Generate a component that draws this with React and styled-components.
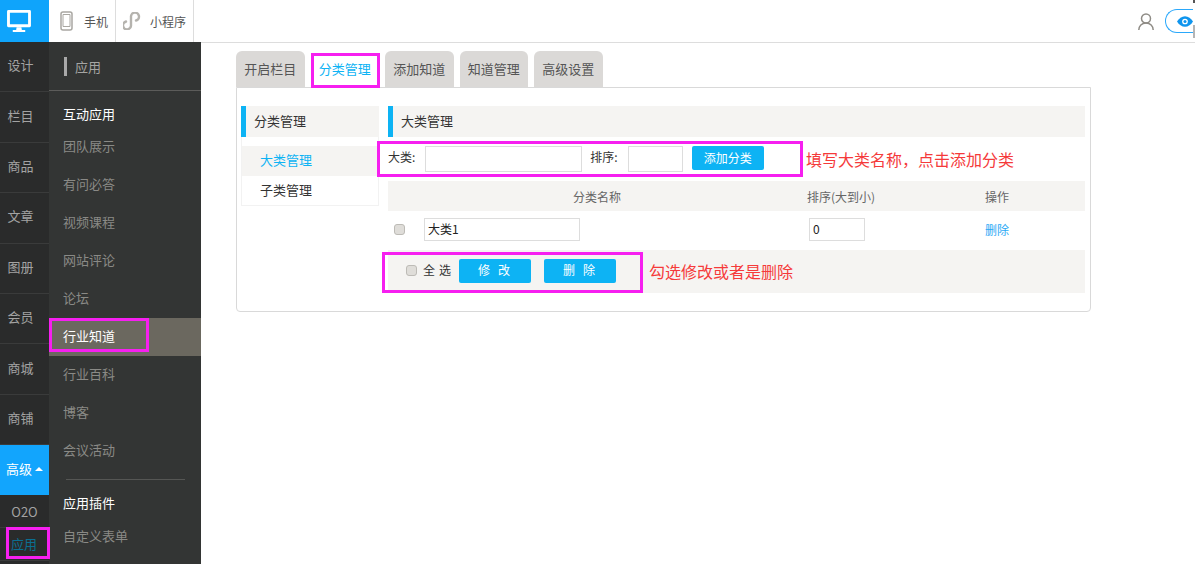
import React from "react";
import styled, { createGlobalStyle } from "styled-components";

const GlobalStyle = createGlobalStyle`
  html, body {
    margin: 0;
    padding: 0;
    height: 564px;
    overflow: hidden;
    background: #fff;
    font-family: "Noto Sans CJK SC", "Liberation Sans", sans-serif;
    font-size: 13px;
    color: #333;
  }
  * { box-sizing: border-box; }
`;

const Page = styled.div`
  position: relative;
  width: 1195px;
  height: 564px;
  overflow: hidden;
`;

const TopBar = styled.header`
  display: flex;
  height: 42px;
`;

const Logo = styled.div`
  width: 49px;
  height: 42px;
  background: #0fa4fb;
  display: flex;
  align-items: center;
  padding-left: 7px;
`;

const DeviceTab = styled.div`
  display: flex;
  align-items: center;
  width: ${(p) => p.$w}px;
  padding-left: ${(p) => p.$pad}px;
  gap: ${(p) => p.$gap}px;
  font-size: 12px;
  color: #555;
  border-right: 1px solid #ddd;
`;

const TopRight = styled.div`
  margin-left: auto;
  display: flex;
  align-items: center;
  gap: 11px;
  height: 42px;
  padding-right: 2px;
`;

const EyePill = styled.div`
  width: 28px;
  height: 24px;
  border: 1px solid #2aa8fb;
  border-radius: 12px 0 0 12px;
  border-right: none;
  display: flex;
  align-items: center;
  padding-left: 11px;
`;

const ScrollEdge = styled.div`
  position: absolute;
  top: 0;
  right: 0;
  width: 2px;
  height: 38px;
  background: linear-gradient(#555 0 3px, #fff 3px 25px, #b5b5b5 25px);
`;

const Body = styled.div`
  display: flex;
  height: 522px;
`;

const Rail = styled.nav`
  width: 49px;
  flex-shrink: 0;
  background: #2a2b2b;
  display: flex;
  flex-direction: column;
`;

const RailItem = styled.div`
  height: ${(p) => p.$h || 50.4}px;
  flex-shrink: 0;
  padding: 0 ${(p) => (p.$pr === undefined ? 8 : p.$pr)}px ${(p) => (p.$pb === undefined ? 4 : p.$pb)}px 0;
  display: flex;
  align-items: center;
  justify-content: center;
  gap: 3px;
  color: ${(p) => (p.$active ? "#fff" : p.$link ? "#0b6f92" : "#a3a3a3")};
  background: ${(p) => (p.$active ? "#12a5fd" : "transparent")};
  border-bottom: 1px solid ${(p) => (p.$active ? "#12a5fd" : "#3a3b3b")};
`;

const Caret = styled.span`
  width: 0;
  height: 0;
  border-left: 4px solid transparent;
  border-right: 4px solid transparent;
  border-bottom: 4px solid #fff;
`;

const SidePanel = styled.aside`
  width: 152px;
  flex-shrink: 0;
  overflow: hidden;
  background: #333534;
  color: #8f8f8b;
  display: flex;
  flex-direction: column;
`;

const PanelTitle = styled.div`
  height: 49px;
  flex-shrink: 0;
  display: flex;
  align-items: center;
  padding-left: 15px;
  gap: 8px;
  border-bottom: 1px solid #5c5c5a;
  color: #a5a5a3;
  font-size: 13px;
  &::before {
    content: "";
    width: 3px;
    height: 19px;
    background: #a9a9a9;
  }
`;

const GroupTitle = styled.div`
  height: ${(p) => p.$h}px;
  flex-shrink: 0;
  padding: 7px 0 0 14px;
  display: flex;
  align-items: center;
  color: #fff;
`;

const SideLink = styled.div`
  height: 38px;
  flex-shrink: 0;
  padding: 0 0 4px 14px;
  display: flex;
  align-items: center;
  color: ${(p) => (p.$active ? "#fff" : "#8a8a86")};
  background: ${(p) => (p.$active ? "#6b685f" : "transparent")};
`;

const SideRule = styled.div`
  height: 1px;
  flex-shrink: 0;
  margin: 9px 16px 0 17px;
  background: #555654;
`;

const Main = styled.main`
  flex: 1;
  border-top: 1px solid #ddd;
  padding: 8px 0 0 35px;
`;

const Tabs = styled.div`
  display: flex;
  gap: 6px;
  height: 36px;
  position: relative;
  z-index: 1;
`;

const Tab = styled.div`
  width: 68.5px;
  height: ${(p) => (p.$active ? 37 : 36)}px;
  padding-bottom: 2px;
  border-radius: 6px 6px 0 0;
  background: ${(p) => (p.$active ? "#fff" : "#dbd9d7")};
  color: ${(p) => (p.$active ? "#0db3f4" : "#555")};
  display: flex;
  align-items: center;
  justify-content: center;
`;

const Card = styled.section`
  width: 855px;
  height: 225px;
  border: 1px solid #d9d9d9;
  border-radius: 0 0 4px 4px;
  padding: 18px 5px 0 4px;
  display: flex;
  gap: 9px;
`;

const LeftCol = styled.div`
  width: 138px;
`;

const RightCol = styled.div`
  flex: 1;
`;

const SectionHead = styled.div`
  height: 31px;
  background: #f5f4f2;
  border-left: 5px solid #0db3f4;
  padding: 0 0 2px 8px;
  display: flex;
  align-items: center;
  color: #333;
`;

const SubMenu = styled.div`
  height: 69px;
  border: 1px solid #f2f2f2;
  border-top: none;
  padding-top: 9px;
`;

const SubItem = styled.div`
  height: 30px;
  padding: 0 0 4px 18px;
  display: flex;
  align-items: center;
  background: ${(p) => (p.$active ? "#f5f4f2" : "transparent")};
  color: ${(p) => (p.$active ? "#0db3f4" : "#333")};
`;

const FormRow = styled.div`
  height: 44px;
  padding-top: 9px;
  display: flex;
  align-items: flex-start;
  font-size: 12px;
  color: #333;
`;

const FormLabel = styled.span`
  line-height: 22px;
  margin-right: ${(p) => p.$gap}px;
`;

const TextBox = styled.input`
  width: ${(p) => p.$w}px;
  height: ${(p) => p.$h || 26}px;
  border: 1px solid #ddd;
  background: #fff;
  padding: 0 3px 2px;
  font: inherit;
  font-size: 12px;
  color: #222;
  outline: none;
  margin-right: ${(p) => p.$gap || 0}px;
`;

const BlueButton = styled.button`
  width: 72px;
  height: 24px;
  border: none;
  border-radius: 2px;
  background: #0db3f4;
  color: #fff;
  font: inherit;
  font-size: 12px;
  padding: 0 0 2px ${(p) => (p.$spread ? 6 : 0)}px;
  letter-spacing: ${(p) => p.$spread || 0}px;
`;

const Grid = styled.div`
  display: grid;
  grid-template-columns: 36px 385px 176px 1fr;
  align-items: center;
  height: ${(p) => p.$h}px;
  padding-bottom: ${(p) => p.$pb || 0}px;
  background: ${(p) => (p.$head ? "#f5f4f2" : "#fff")};
  color: ${(p) => (p.$head ? "#666" : "#333")};
  font-size: 12px;
`;

const HeadName = styled.span`
  padding-left: 149px;
`;

const HeadSort = styled.span`
  margin-left: -2px;
`;

const Check = styled.input.attrs({ type: "checkbox" })`
  appearance: none;
  width: 11px;
  height: 11px;
  margin: 0 0 0 ${(p) => p.$left || 0}px;
  border: 1px solid #bdbbb6;
  border-radius: 3px;
  background: #dfddd9;
`;

const DelLink = styled.a`
  color: #2aa8f5;
`;

const Footer = styled.div`
  height: 43px;
  background: #f5f4f2;
  display: flex;
  align-items: center;
  font-size: 12px;
  color: #333;
  padding-bottom: 2px;
`;

const SelectAll = styled.span`
  letter-spacing: 4px;
  margin: 0 4px 2px 6px;
`;

const Gap = styled.span`
  width: 13px;
`;

const Highlight = styled.div`
  position: absolute;
  left: ${(p) => p.$x}px;
  top: ${(p) => p.$y}px;
  width: ${(p) => p.$w}px;
  height: ${(p) => p.$h}px;
  border: 3px solid #f61ff0;
  pointer-events: none;
  z-index: 3;
`;

const Note = styled.div`
  position: absolute;
  left: ${(p) => p.$x}px;
  top: ${(p) => p.$y}px;
  font-size: 16px;
  line-height: 22px;
  color: #f53a3a;
  white-space: nowrap;
  z-index: 3;
`;

const railItems = ["设计", "栏目", "商品", "文章", "图册", "会员", "商城", "商铺"];
const linksTop = ["团队展示", "有问必答", "视频课程", "网站评论", "论坛"];
const linksBottom = ["行业百科", "博客", "会议活动"];
const tabNames = ["开启栏目", "分类管理", "添加知道", "知道管理", "高级设置"];

export default function App() {
  return (
    <Page>
      <GlobalStyle />
      <TopBar>
        <Logo>
          <svg width="24" height="22" viewBox="0 0 25 23">
            <path
              fillRule="evenodd"
              fill="#fff"
              d="M1.500 0h22A1.500 1.500 0 0 1 25 1.500v15a1.500 1.500 0 0 1-1.500 1.500h-22A1.500 1.500 0 0 1 0 16.500v-15A1.500 1.500 0 0 1 1.500 0zM3 3v12h19V3z"
            />
            <path fill="#fff" d="M10 18h5l.5 3H19v2H6v-2h3.500z" />
          </svg>
        </Logo>
        <DeviceTab $w={67} $pad={11} $gap={11}>
          <svg width="13" height="20" viewBox="0 0 13 20" fill="none" stroke="#a9a7a2">
            <rect x="1" y="1" width="11" height="18" rx="2" strokeWidth="1.500" />
            <path d="M3 3.500h7v12H3z" strokeWidth="1" />
          </svg>
          手机
        </DeviceTab>
        <DeviceTab $w={78} $pad={7} $gap={9}>
          <svg width="18" height="18" viewBox="0 0 18 18" fill="none" stroke="#b5b3ae" strokeWidth="2.400" strokeLinecap="round">
            <path d="M3 9.500A4 4 0 1 0 8 13V5A4 4 0 1 1 13 8.500" />
          </svg>
          小程序
        </DeviceTab>
        <TopRight>
          <svg width="16" height="17" viewBox="0 0 16 17" fill="none" stroke="#8f8c86" strokeWidth="1.500">
            <circle cx="8" cy="5.500" r="4.500" />
            <path d="M.800 17c0-4 3-7 7.200-7s7.200 3 7.200 7" />
          </svg>
          <EyePill>
            <svg width="16" height="11" viewBox="0 0 18 12">
              <path fill="#0f95ee" d="M0 6c2-3.500 5.500-6 9-6s7 2.500 9 6c-2 3.500-5.500 6-9 6s-7-2.500-9-6z" />
              <circle cx="9" cy="6" r="3.200" fill="#fff" />
              <circle cx="9" cy="6" r="1.700" fill="#0f95ee" />
            </svg>
          </EyePill>
        </TopRight>
      </TopBar>
      <ScrollEdge />
      <Body>
        <Rail>
          {railItems.map((name) => (
            <RailItem key={name}>{name}</RailItem>
          ))}
          <RailItem $active $h={50} $pb={2} $pr={0}>
            高级
            <Caret />
          </RailItem>
          <RailItem $h={33} $pb={0} $pr={0}>O2O</RailItem>
          <RailItem $h={33} $pb={2} $pr={1} $link>
            应用
          </RailItem>
        </Rail>
        <SidePanel>
          <PanelTitle>应用</PanelTitle>
          <GroupTitle $h={37}>互动应用</GroupTitle>
          {linksTop.map((name) => (
            <SideLink key={name}>{name}</SideLink>
          ))}
          <SideLink $active>行业知道</SideLink>
          {linksBottom.map((name) => (
            <SideLink key={name}>{name}</SideLink>
          ))}
          <SideRule />
          <GroupTitle $h={38}>应用插件</GroupTitle>
          <SideLink>自定义表单</SideLink>
        </SidePanel>
        <Main>
          <Tabs>
            {tabNames.map((name) => (
              <Tab key={name} $active={name === "分类管理"}>
                {name}
              </Tab>
            ))}
          </Tabs>
          <Card>
            <LeftCol>
              <SectionHead>分类管理</SectionHead>
              <SubMenu>
                <SubItem $active>大类管理</SubItem>
                <SubItem>子类管理</SubItem>
              </SubMenu>
            </LeftCol>
            <RightCol>
              <SectionHead>大类管理</SectionHead>
              <FormRow>
                <FormLabel $gap={10}>大类:</FormLabel>
                <TextBox $w={157} $gap={8} />
                <FormLabel $gap={10}>排序:</FormLabel>
                <TextBox $w={55} $gap={9} />
                <BlueButton>添加分类</BlueButton>
              </FormRow>
              <Grid $head $h={30}>
                <span />
                <HeadName>分类名称</HeadName>
                <HeadSort>排序(大到小)</HeadSort>
                <span>操作</span>
              </Grid>
              <Grid $h={39} $pb={2}>
                <Check $left={6} />
                <TextBox $w={156} $h={23} defaultValue="大类1" />
                <TextBox $w={56} $h={23} defaultValue="0" />
                <DelLink>删除</DelLink>
              </Grid>
              <Footer>
                <Check $left={18} />
                <SelectAll>全选</SelectAll>
                <BlueButton $spread={8}>修改</BlueButton>
                <Gap />
                <BlueButton $spread={8}>删除</BlueButton>
              </Footer>
            </RightCol>
          </Card>
        </Main>
      </Body>
      <Highlight $x={311} $y={53} $w={69} $h={35} />
      <Highlight $x={377} $y={141} $w={426} $h={36} />
      <Highlight $x={382} $y={252} $w={261} $h={41} />
      <Highlight $x={49} $y={318} $w={100} $h={34} />
      <Highlight $x={6} $y={527} $w={44} $h={32} />
      <Note $x={806} $y={148}>填写大类名称，点击添加分类</Note>
      <Note $x={649} $y={260}>勾选修改或者是删除</Note>
    </Page>
  );
}
